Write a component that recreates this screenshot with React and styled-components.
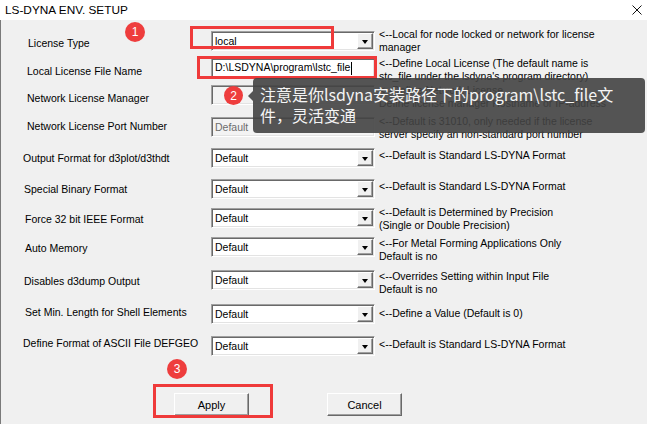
import React from "react";
import styled, { createGlobalStyle } from "styled-components";

const Global = createGlobalStyle`
  html, body { margin: 0; padding: 0; background: #f0f0f0; }
  body { font-family: "Liberation Sans", Arial, sans-serif; }
`;

const Window = styled.div`
  position: relative;
  width: 647px;
  height: 424px;
  overflow: hidden;
  background: #f0f0f0;
  display: flex;
  flex-direction: column;
  font-family: "Liberation Sans", Arial, sans-serif;
  font-size: 10.5px;
  color: #000;
`;

const TitleBar = styled.div`
  height: 20px;
  flex: none;
  background: #fff;
  display: flex;
  align-items: center;
  justify-content: space-between;
  padding: 0 5px 1px 5px;
  box-sizing: border-box;
`;

const Title = styled.div`
  font-size: 11.8px;
  color: #000;
`;

const CloseIcon = styled.svg`
  width: 10px;
  height: 10px;
`;

const Body = styled.div`
  flex: 1;
  border-left: 1px solid #7a7a7a;
  padding-top: 8px;
  display: flex;
  flex-direction: column;
`;

const Row = styled.div`
  height: ${(p) => p.$h}px;
  display: grid;
  grid-template-columns: 210px 164px 1fr;
  align-items: start;
`;

const Label = styled.div`
  padding-left: ${(p) => p.$x - 1}px;
  margin-top: ${(p) => p.$top}px;
  line-height: 13px;
  white-space: nowrap;
`;

const Sunken = styled.div`
  width: 164px;
  height: 20px;
  box-sizing: border-box;
  margin-top: ${(p) => p.$top}px;
  display: flex;
  align-items: center;
  background: ${(p) => (p.$disabled ? "#f3f3f3" : "#fff")};
  border: 1px solid;
  border-color: #a0a0a0 #fff #fff #a0a0a0;
  box-shadow: inset 1px 1px #696969, inset -1px -1px #e3e3e3;
  padding: 0 1px 0 3px;
`;

const Value = styled.span`
  flex: 1;
  white-space: nowrap;
  overflow: hidden;
  line-height: 13px;
  color: ${(p) => (p.$disabled ? "#6d6d6d" : "#000")};
`;

const Caret = styled.span`
  display: inline-block;
  width: 1px;
  height: 13px;
  background: #000;
  vertical-align: middle;
  margin-left: 1px;
`;

const DropBtn = styled.div`
  width: 16px;
  height: 16px;
  box-sizing: border-box;
  background: #f0f0f0;
  border: 1px solid;
  border-color: #fff #696969 #696969 #fff;
  box-shadow: inset -1px -1px #a0a0a0;
  display: flex;
  align-items: center;
  justify-content: center;
`;

const Arrow = styled.span`
  width: 0;
  height: 0;
  border-left: 3.5px solid transparent;
  border-right: 3.5px solid transparent;
  border-top: 4px solid #000;
  margin-top: 1px;
`;

const Note = styled.div`
  margin-left: 4px;
  margin-top: ${(p) => p.$top}px;
  line-height: 13px;
  white-space: nowrap;
`;

const ButtonRow = styled.div`
  display: flex;
  gap: 78px;
  padding-left: 173px;
  margin-top: 32px;
`;

const Button = styled.div`
  width: 75px;
  height: 23px;
  box-sizing: border-box;
  display: flex;
  align-items: center;
  justify-content: center;
  font-size: 11px;
  background: #f0f0f0;
  border: 1px solid;
  border-color: #fff #696969 #696969 #fff;
  box-shadow: inset -1px -1px #a0a0a0;
`;

const RedBox = styled.div`
  position: absolute;
  left: ${(p) => p.$x}px;
  top: ${(p) => p.$y}px;
  width: ${(p) => p.$w}px;
  height: ${(p) => p.$h}px;
  box-sizing: border-box;
  border: 3px solid #ef3a3a;
`;

const Badge = styled.div`
  position: absolute;
  left: ${(p) => p.$x}px;
  top: ${(p) => p.$y}px;
  width: ${(p) => p.$d}px;
  height: ${(p) => p.$d}px;
  border-radius: 50%;
  background: #ee3d3d;
  color: #fff;
  font-family: "Liberation Sans", Arial, sans-serif;
  font-size: 12px;
  display: flex;
  align-items: center;
  justify-content: center;
`;

const Tooltip = styled.div`
  position: absolute;
  left: 253px;
  top: 78px;
  width: 392px;
  height: 55px;
  box-sizing: border-box;
  padding: 6px 0 0 7px;
  border-radius: 4px;
  background: rgba(66, 66, 66, 0.9);
  color: #f4f4f4;
  font-family: "Noto Sans CJK SC", "Noto Sans", sans-serif;
  font-size: 16px;
  line-height: 21px;
  white-space: nowrap;
  &::before {
    content: "";
    position: absolute;
    left: -5px;
    top: 13px;
    border-top: 5px solid transparent;
    border-bottom: 5px solid transparent;
    border-right: 5px solid rgba(66, 66, 66, 0.9);
  }
`;

const rows = [
  { label: "License Type", x: 28, h: 26, lt: 9, ct: 3, at: 0, kind: "combo", value: "local",
    note: ["<--Local for node locked or network for license", "manager"] },
  { label: "Local License File Name", x: 27, h: 28, lt: 11, ct: 4, at: 3, kind: "edit", value: "D:\\LSDYNA\\program\\lstc_file",
    note: ["<--Define Local License (The default name is", "stc_file under the lsdyna's program directory)"] },
  { label: "Network License Manager", x: 27, h: 30, lt: 10, ct: 3, at: 2, kind: "field", value: "", disabled: true,
    note: ["<--Define Network License", "Define license manager Hostname or IP-address"] },
  { label: "Network License Port Number", x: 27, h: 31, lt: 8, ct: 5, at: 3, kind: "field", value: "Default", disabled: true,
    note: ["<--Default is 31010, only needed if the license", "server specify an non-standard port number"] },
  { label: "Output Format for d3plot/d3thdt", x: 23, h: 31, lt: 9, ct: 5, at: 6, kind: "combo", value: "Default",
    note: ["<--Default is Standard LS-DYNA Format"] },
  { label: "Special Binary Format", x: 24, h: 30, lt: 9, ct: 5, at: 6, kind: "combo", value: "Default",
    note: ["<--Default is Standard LS-DYNA Format"] },
  { label: "Force 32 bit IEEE Format", x: 25, h: 28, lt: 9, ct: 4, at: 2, kind: "combo", value: "Default",
    note: ["<--Default is Determined by Precision", "(Single or Double Precision)"] },
  { label: "Auto Memory", x: 25, h: 31, lt: 10, ct: 5, at: 5, kind: "combo", value: "Default",
    note: ["<--For Metal Forming Applications Only", "Default is no"] },
  { label: "Disables d3dump Output", x: 24, h: 34, lt: 12, ct: 7, at: 7, kind: "combo", value: "Default",
    note: ["<--Overrides Setting within Input File", "Default is no"] },
  { label: "Set Min. Length for Shell Elements", x: 25, h: 34, lt: 9, ct: 7, at: 10, kind: "combo", value: "Default",
    note: ["<--Define a Value (Default is 0)"] },
  { label: "Define Format of ASCII File DEFGEO", x: 23, h: 30, lt: 6, ct: 5, at: 7, kind: "combo", value: "Default",
    note: ["<--Default is Standard LS-DYNA Format"] },
];

function Control({ r }) {
  return (
    <Sunken $top={r.ct} $disabled={r.disabled}>
      <Value $disabled={r.disabled}>
        {r.value}
        {r.kind === "edit" && <Caret />}
      </Value>
      {r.kind === "combo" && (
        <DropBtn>
          <Arrow />
        </DropBtn>
      )}
    </Sunken>
  );
}

export default function App() {
  return (
    <>
      <Global />
      <Window>
        <TitleBar>
          <Title>LS-DYNA ENV. SETUP</Title>
          <CloseIcon viewBox="0 0 10 10">
            <path d="M0.5 0.5 L9.5 9.5 M9.5 0.5 L0.5 9.5" stroke="#111" strokeWidth="1" fill="none" />
          </CloseIcon>
        </TitleBar>
        <Body>
          {rows.map((r) => (
            <Row key={r.label} $h={r.h}>
              <Label $x={r.x} $top={r.lt}>{r.label}</Label>
              <Control r={r} />
              <Note $top={r.at}>
                {r.note.map((line, i) => (
                  <div key={i}>{line}</div>
                ))}
              </Note>
            </Row>
          ))}
          <ButtonRow>
            <Button>Apply</Button>
            <Button>Cancel</Button>
          </ButtonRow>
        </Body>

        <RedBox $x={190} $y={26} $w={144} $h={23} />
        <RedBox $x={197} $y={56} $w={180} $h={23} />
        <RedBox $x={153} $y={384} $w={120} $h={34} />

        <Tooltip>
          注意是你lsdyna安装路径下的program\lstc_file文
          <br />
          件，灵活变通
        </Tooltip>

        <Badge $x={125} $y={22} $d={20}>1</Badge>
        <Badge $x={224} $y={86} $d={19}>2</Badge>
        <Badge $x={167} $y={359} $d={20}>3</Badge>
      </Window>
    </>
  );
}
